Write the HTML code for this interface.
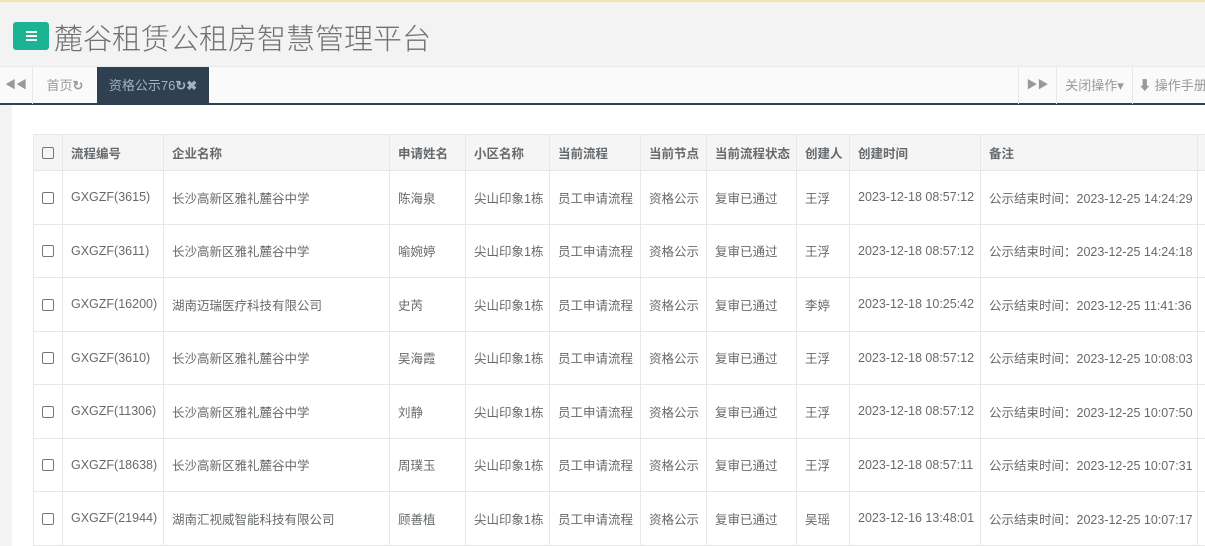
<!DOCTYPE html>
<html><head><meta charset="utf-8"><style>
*{margin:0;padding:0;box-sizing:border-box}
html,body{width:1205px;height:546px;overflow:hidden}
body{background:#f3f3f4;font-family:"Liberation Sans","Noto Sans CJK SC",sans-serif;position:relative;color:#676a6c}
.top{position:absolute;left:0;top:0;width:1205px;height:2px;background:#f6e3a8}
.btn{position:absolute;left:13px;top:22px;width:36px;height:28px;background:#1ab394;border-radius:3px}
.btn i{position:absolute;left:13px;width:11px;height:2px;background:#fff}
.title{position:absolute;left:54px;top:16px;font-size:29px;color:#6f7274;font-weight:300}
.tabs{position:absolute;left:0;top:66px;width:1205px;height:39px;background:#fafafa;border-top:1px solid #e7eaec;border-bottom:2px solid #2f4050}
.t{position:absolute;top:0;height:37px;line-height:37px;font-size:13px;color:#999;text-align:center}
.bl{border-left:1px solid #e7eaec}
.act{background:#2f4050;color:#a7b1c2}
.content{position:absolute;left:12px;top:105px;width:1193px;height:441px;background:#fff}
table{position:absolute;left:33px;top:134px;width:1185px;border-collapse:collapse;font-size:12.5px;color:#676a6c;table-layout:fixed}
td,th{border:1px solid #e7e7e7;padding:0 0 0 8px;white-space:nowrap;overflow:hidden;text-align:left;vertical-align:middle}
th{height:36px;background:#f5f5f6;font-weight:bold;color:#676a6c}
td{height:53.5px;background:#fff}
.cb{display:inline-block;width:12px;height:12px;border:1px solid #777;border-radius:2px;vertical-align:middle}
</style></head><body>
<div class="top"></div>
<div class="btn"><i style="top:9px"></i><i style="top:13px"></i><i style="top:17px"></i></div>
<div class="title">麓谷租赁公租房智慧管理平台</div>
<div class="tabs">
<div class="t" style="left:0;width:32px;font-size:11px">◀◀</div>
<div class="t bl" style="left:32px;width:65px">首页<b>↻</b></div>
<div class="t act" style="left:97px;width:112px">资格公示76<b>↻✖</b></div>
<div class="t bl" style="left:1018px;width:38px;font-size:11px">▶▶</div>
<div class="t bl" style="left:1056px;width:76px">关闭操作▾</div>
<div class="t bl" style="left:1132px;width:80px">⬇ 操作手册</div>
</div>
<div class="content"></div>
<table>
<colgroup><col style="width:29px"><col style="width:101px"><col style="width:226px"><col style="width:76px"><col style="width:84px"><col style="width:91px"><col style="width:66px"><col style="width:90px"><col style="width:53px"><col style="width:131px"><col style="width:217px"><col style="width:21px"></colgroup>
<tr><th><span class="cb"></span></th><th>流程编号</th><th>企业名称</th><th>申请姓名</th><th>小区名称</th><th>当前流程</th><th>当前节点</th><th>当前流程状态</th><th>创建人</th><th>创建时间</th><th>备注</th><th></th></tr>
<tr><td><span class="cb"></span></td><td>GXGZF(3615)</td><td>长沙高新区雅礼麓谷中学</td><td>陈海泉</td><td>尖山印象1栋</td><td>员工申请流程</td><td>资格公示</td><td>复审已通过</td><td>王浮</td><td>2023-12-18 08:57:12</td><td>公示结束时间：2023-12-25 14:24:29</td><td></td></tr>
<tr><td><span class="cb"></span></td><td>GXGZF(3611)</td><td>长沙高新区雅礼麓谷中学</td><td>喻婉婷</td><td>尖山印象1栋</td><td>员工申请流程</td><td>资格公示</td><td>复审已通过</td><td>王浮</td><td>2023-12-18 08:57:12</td><td>公示结束时间：2023-12-25 14:24:18</td><td></td></tr>
<tr><td><span class="cb"></span></td><td>GXGZF(16200)</td><td>湖南迈瑞医疗科技有限公司</td><td>史芮</td><td>尖山印象1栋</td><td>员工申请流程</td><td>资格公示</td><td>复审已通过</td><td>李婷</td><td>2023-12-18 10:25:42</td><td>公示结束时间：2023-12-25 11:41:36</td><td></td></tr>
<tr><td><span class="cb"></span></td><td>GXGZF(3610)</td><td>长沙高新区雅礼麓谷中学</td><td>吴海霞</td><td>尖山印象1栋</td><td>员工申请流程</td><td>资格公示</td><td>复审已通过</td><td>王浮</td><td>2023-12-18 08:57:12</td><td>公示结束时间：2023-12-25 10:08:03</td><td></td></tr>
<tr><td><span class="cb"></span></td><td>GXGZF(11306)</td><td>长沙高新区雅礼麓谷中学</td><td>刘静</td><td>尖山印象1栋</td><td>员工申请流程</td><td>资格公示</td><td>复审已通过</td><td>王浮</td><td>2023-12-18 08:57:12</td><td>公示结束时间：2023-12-25 10:07:50</td><td></td></tr>
<tr><td><span class="cb"></span></td><td>GXGZF(18638)</td><td>长沙高新区雅礼麓谷中学</td><td>周璞玉</td><td>尖山印象1栋</td><td>员工申请流程</td><td>资格公示</td><td>复审已通过</td><td>王浮</td><td>2023-12-18 08:57:11</td><td>公示结束时间：2023-12-25 10:07:31</td><td></td></tr>
<tr><td><span class="cb"></span></td><td>GXGZF(21944)</td><td>湖南汇视威智能科技有限公司</td><td>顾善植</td><td>尖山印象1栋</td><td>员工申请流程</td><td>资格公示</td><td>复审已通过</td><td>吴瑶</td><td>2023-12-16 13:48:01</td><td>公示结束时间：2023-12-25 10:07:17</td><td></td></tr>
</table>
</body></html>
